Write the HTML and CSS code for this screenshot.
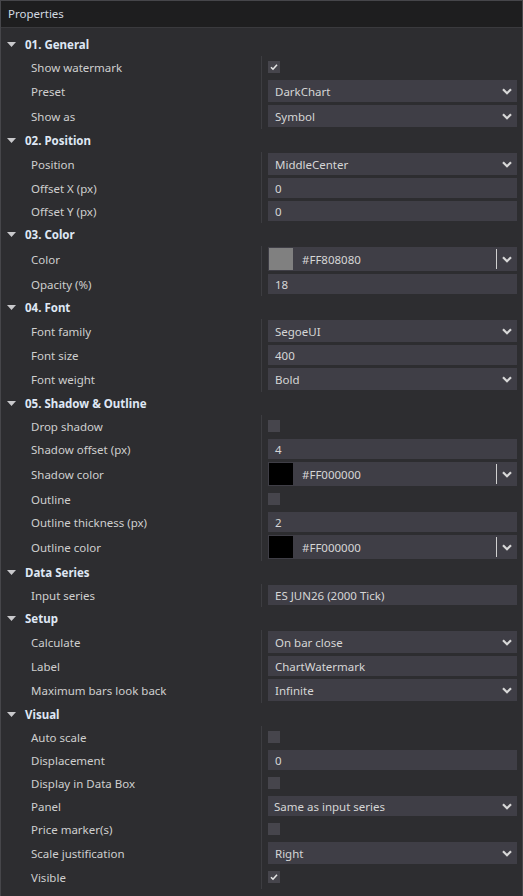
FILE: index.html
```html
<!DOCTYPE html>
<html>
  <head>
    <title>Properties</title>
    <link rel="stylesheet" href="styles.css">
  </head>
  <body>
    <div class="panel">
      <div class="titlebar">Properties</div>

      <div class="grid">
        <!-- 01. General -->
        <div class="cat"><svg class="caret" viewBox="0 0 9 5"><path d="M0 0H9L4.5 5Z"/></svg>01. General</div>
        <div class="row">
          <div class="name">Show watermark</div>
          <div class="val"><span class="check on"><svg viewBox="0 0 12 12"><path d="M3 6.2L5 8.2L9 3.8"/></svg></span></div>
        </div>
        <div class="row">
          <div class="name">Preset</div>
          <div class="val"><div class="select"><span>DarkChart</span><svg class="chev" viewBox="0 0 10 7"><path d="M1 1.2L5 5.2L9 1.2"/></svg></div></div>
        </div>
        <div class="row">
          <div class="name">Show as</div>
          <div class="val"><div class="select"><span>Symbol</span><svg class="chev" viewBox="0 0 10 7"><path d="M1 1.2L5 5.2L9 1.2"/></svg></div></div>
        </div>

        <!-- 02. Position -->
        <div class="cat"><svg class="caret" viewBox="0 0 9 5"><path d="M0 0H9L4.5 5Z"/></svg>02. Position</div>
        <div class="row">
          <div class="name">Position</div>
          <div class="val"><div class="select"><span>MiddleCenter</span><svg class="chev" viewBox="0 0 10 7"><path d="M1 1.2L5 5.2L9 1.2"/></svg></div></div>
        </div>
        <div class="row">
          <div class="name">Offset X (px)</div>
          <div class="val"><div class="text">0</div></div>
        </div>
        <div class="row">
          <div class="name">Offset Y (px)</div>
          <div class="val"><div class="text">0</div></div>
        </div>

        <!-- 03. Color -->
        <div class="cat"><svg class="caret" viewBox="0 0 9 5"><path d="M0 0H9L4.5 5Z"/></svg>03. Color</div>
        <div class="row">
          <div class="name">Color</div>
          <div class="val"><div class="color"><span class="swatch grey"></span><span class="hex">#FF808080</span><span class="sep"></span><svg class="chev" viewBox="0 0 10 7"><path d="M1 1.2L5 5.2L9 1.2"/></svg></div></div>
        </div>
        <div class="row">
          <div class="name">Opacity (%)</div>
          <div class="val"><div class="text">18</div></div>
        </div>

        <!-- 04. Font -->
        <div class="cat"><svg class="caret" viewBox="0 0 9 5"><path d="M0 0H9L4.5 5Z"/></svg>04. Font</div>
        <div class="row">
          <div class="name">Font family</div>
          <div class="val"><div class="select"><span>SegoeUI</span><svg class="chev" viewBox="0 0 10 7"><path d="M1 1.2L5 5.2L9 1.2"/></svg></div></div>
        </div>
        <div class="row">
          <div class="name">Font size</div>
          <div class="val"><div class="text">400</div></div>
        </div>
        <div class="row">
          <div class="name">Font weight</div>
          <div class="val"><div class="select"><span>Bold</span><svg class="chev" viewBox="0 0 10 7"><path d="M1 1.2L5 5.2L9 1.2"/></svg></div></div>
        </div>

        <!-- 05. Shadow & Outline -->
        <div class="cat"><svg class="caret" viewBox="0 0 9 5"><path d="M0 0H9L4.5 5Z"/></svg>05. Shadow &amp; Outline</div>
        <div class="row">
          <div class="name">Drop shadow</div>
          <div class="val"><span class="check"></span></div>
        </div>
        <div class="row">
          <div class="name">Shadow offset (px)</div>
          <div class="val"><div class="text">4</div></div>
        </div>
        <div class="row">
          <div class="name">Shadow color</div>
          <div class="val"><div class="color"><span class="swatch black"></span><span class="hex">#FF000000</span><span class="sep"></span><svg class="chev" viewBox="0 0 10 7"><path d="M1 1.2L5 5.2L9 1.2"/></svg></div></div>
        </div>
        <div class="row">
          <div class="name">Outline</div>
          <div class="val"><span class="check"></span></div>
        </div>
        <div class="row">
          <div class="name">Outline thickness (px)</div>
          <div class="val"><div class="text">2</div></div>
        </div>
        <div class="row">
          <div class="name">Outline color</div>
          <div class="val"><div class="color"><span class="swatch black"></span><span class="hex">#FF000000</span><span class="sep"></span><svg class="chev" viewBox="0 0 10 7"><path d="M1 1.2L5 5.2L9 1.2"/></svg></div></div>
        </div>

        <!-- Data Series -->
        <div class="cat"><svg class="caret" viewBox="0 0 9 5"><path d="M0 0H9L4.5 5Z"/></svg>Data Series</div>
        <div class="row">
          <div class="name">Input series</div>
          <div class="val"><div class="text">ES JUN26 (2000 Tick)</div></div>
        </div>

        <!-- Setup -->
        <div class="cat"><svg class="caret" viewBox="0 0 9 5"><path d="M0 0H9L4.5 5Z"/></svg>Setup</div>
        <div class="row">
          <div class="name">Calculate</div>
          <div class="val"><div class="select"><span>On bar close</span><svg class="chev" viewBox="0 0 10 7"><path d="M1 1.2L5 5.2L9 1.2"/></svg></div></div>
        </div>
        <div class="row">
          <div class="name">Label</div>
          <div class="val"><div class="text">ChartWatermark</div></div>
        </div>
        <div class="row">
          <div class="name">Maximum bars look back</div>
          <div class="val"><div class="select"><span>Infinite</span><svg class="chev" viewBox="0 0 10 7"><path d="M1 1.2L5 5.2L9 1.2"/></svg></div></div>
        </div>

        <!-- Visual -->
        <div class="cat"><svg class="caret" viewBox="0 0 9 5"><path d="M0 0H9L4.5 5Z"/></svg>Visual</div>
        <div class="row">
          <div class="name">Auto scale</div>
          <div class="val"><span class="check"></span></div>
        </div>
        <div class="row">
          <div class="name">Displacement</div>
          <div class="val"><div class="text">0</div></div>
        </div>
        <div class="row">
          <div class="name">Display in Data Box</div>
          <div class="val"><span class="check"></span></div>
        </div>
        <div class="row">
          <div class="name">Panel</div>
          <div class="val"><div class="select small"><span>Same as input series</span><svg class="chev" viewBox="0 0 10 7"><path d="M1 1.2L5 5.2L9 1.2"/></svg></div></div>
        </div>
        <div class="row">
          <div class="name">Price marker(s)</div>
          <div class="val"><span class="check"></span></div>
        </div>
        <div class="row">
          <div class="name">Scale justification</div>
          <div class="val"><div class="select"><span>Right</span><svg class="chev" viewBox="0 0 10 7"><path d="M1 1.2L5 5.2L9 1.2"/></svg></div></div>
        </div>
        <div class="row">
          <div class="name">Visible</div>
          <div class="val"><span class="check on"><svg viewBox="0 0 12 12"><path d="M3 6.2L5 8.2L9 3.8"/></svg></span></div>
        </div>
      </div>
    </div>
  </body>
</html>
```

FILE: styles.css
```css
body{
    margin: 0;
    background-color: #2d2d30;
    font-family: "Noto Sans", "Open Sans", sans-serif;
    font-size: 11.5px;
    color: #cfcfcf;
}

.panel{
    width: 523px;
    min-height: 100vh;
    box-sizing: border-box;
    border: 1px solid #46464a;
    border-bottom: none;
    background-color: #2d2d30;
}

.titlebar{
    height: 26px;
    line-height: 26px;
    padding-left: 7px;
    background-color: #1e1e1f;
    border-bottom: 1px solid #3a3a3d;
    color: #d3dae2;
}

.grid{
    display: flex;
    flex-direction: column;
    padding-top: 5px;
}

/* category header */
.cat{
    display: flex;
    align-items: center;
    height: 23px;
    font-weight: bold;
    color: #dfe7f4;
}

.caret{
    width: 9px;
    height: 5px;
    margin: 0 9px 0 6px;
    fill: #c9c9cc;
}

/* property row */
.row{
    display: flex;
}

.name{
    width: 260px;
    padding-left: 30px;
    box-sizing: border-box;
    display: flex;
    align-items: center;
}

.val{
    flex: 1;
    border-left: 1px solid #3d3d41;
    padding: 1px 5px 2px 6px;
    display: flex;
    align-items: center;
    min-height: 20px;
}

.check{
    width: 12px;
    height: 12px;
    background-color: #46454c;
    display: flex;
}

.check svg{
    width: 12px;
    height: 12px;
    fill: none;
    stroke: #e6e6e6;
    stroke-width: 1.6;
}

.text,
.select,
.color{
    width: 100%;
    box-sizing: border-box;
    background-color: #3f3e46;
    color: #d6d6d6;
    display: flex;
    align-items: center;
}

.text{
    height: 20px;
    padding-left: 7px;
}

.select{
    height: 22px;
    padding: 0 5px 0 7px;
    justify-content: space-between;
}

.select.small{
    height: 20px;
    padding-left: 6px;
}

.chev{
    width: 10px;
    height: 7px;
    fill: none;
    stroke: #d8d8d8;
    stroke-width: 2.2;
}

.color{
    height: 24px;
    padding: 1px 5px 1px 1px;
}

.swatch{
    width: 24px;
    height: 22px;
}

.swatch.grey{
    background-color: #808080;
}

.swatch.black{
    background-color: #000;
}

.hex{
    flex: 1;
    padding-left: 9px;
}

.sep{
    width: 1px;
    height: 20px;
    background-color: #d0d0d0;
    margin-right: 5px;
}
```
